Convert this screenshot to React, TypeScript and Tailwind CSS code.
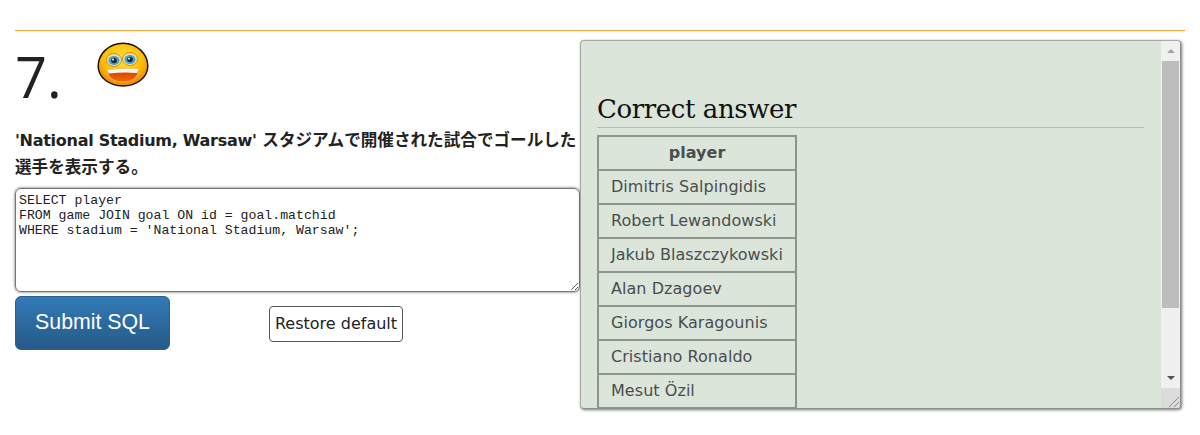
const PLAYERS = ["Dimitris Salpingidis", "Robert Lewandowski", "Jakub Blaszczykowski", "Alan Dzagoev", "Giorgos Karagounis", "Cristiano Ronaldo", "Mesut Özil"];

function Smiley() {
  return (
    <svg width="52" height="46" viewBox="0 0 52 46" className="block">
      <defs>
        <radialGradient id="face" cx="50%" cy="38%" r="62%">
          <stop offset="0%" stopColor="#ffe43c" />
          <stop offset="65%" stopColor="#fdbc08" />
          <stop offset="100%" stopColor="#ea8200" />
        </radialGradient>
        <linearGradient id="mouth" x1="0" y1="0" x2="0" y2="1">
          <stop offset="0%" stopColor="#d83000" />
          <stop offset="100%" stopColor="#f07000" />
        </linearGradient>
      </defs>
      <path d="M26 1.2C40 1.2 50.8 12 50.8 24C50.8 36 39 44 26 44C13 44 1.2 36 1.2 24C1.2 12 12 1.2 26 1.2Z" fill="url(#face)" stroke="#1c1408" strokeWidth="1.5" />
      <ellipse cx="17" cy="18" rx="7.5" ry="6.5" fill="#f9dca0" stroke="#d8881c" strokeWidth="1" />
      <ellipse cx="33" cy="17" rx="7.5" ry="6.5" fill="#f9dca0" stroke="#d8881c" strokeWidth="1" />
      <ellipse cx="17" cy="18.5" rx="5.5" ry="4.5" fill="#3fa6cc" />
      <ellipse cx="33" cy="17.5" rx="5.5" ry="4.5" fill="#3fa6cc" />
      <circle cx="17" cy="18.5" r="2.8" fill="#1e2a34" />
      <circle cx="33" cy="17.5" r="2.8" fill="#1e2a34" />
      <circle cx="16" cy="17.5" r="1" fill="#fff" />
      <circle cx="32" cy="16.5" r="1" fill="#fff" />
      <path d="M10.5 28Q26 26 41.5 27Q41 40 26 40Q11 40 10.5 28Z" fill="url(#mouth)" stroke="#f6c9a0" strokeWidth="0.6" />
      <path d="M10.5 28Q26 26 41.5 27Q41 29.5 40 31Q26 30 12 31.5Q10.8 30 10.5 28Z" fill="#fbf8f2" />
    </svg>
  );
}

function CorrectAnswer() {
  return (
    <div className="absolute left-[580px] top-[40px] flex h-[369px] w-[601px] overflow-hidden rounded-[4px] border border-[#a8a8a8] border-r-[#8b8f92] border-b-[#8b8f92] bg-[#dbe5da] shadow-[1px_1px_3px_rgba(0,0,0,0.55)]">
      <div className="min-w-0 flex-1 overflow-hidden pl-[16px] pr-[17px] pt-[51px]">
        <h3 className="border-b border-[#b4bab4] text-[26px] leading-[35px] text-[#111] [font-family:'DejaVu_Serif',serif] tracking-[-0.4px]">Correct answer</h3>
        <table className="mt-[7px] w-[200px] border-collapse text-[16px] tracking-[0.05px] text-[#4a4d50] [font-family:'DejaVu_Sans',sans-serif]">
          <thead>
            <tr>
              <th className="h-[34px] border-2 border-[#8f948f] p-0 text-center font-bold">player</th>
            </tr>
          </thead>
          <tbody>
            {PLAYERS.map((p) => (
              <tr key={p}>
                <td className="h-[34px] whitespace-nowrap border-2 border-[#8f948f] px-[12px] py-0">{p}</td>
              </tr>
            ))}
          </tbody>
        </table>
      </div>
      <div className="relative flex w-[19px] shrink-0 flex-col items-center bg-[#f0f0f0]">
        <div className="flex h-[20px] w-full items-center justify-center">
          <div className="h-0 w-0 border-x-[4px] border-b-[4px] border-x-transparent border-b-[#a3a3a3]" />
        </div>
        <div className="h-[247px] w-[17px] bg-[#bdbdbd]" />
        <div className="flex-1" />
        <div className="flex h-[20px] w-full items-center justify-center">
          <div className="h-0 w-0 border-x-[4px] border-t-[4px] border-x-transparent border-t-[#505050]" />
        </div>
        <div className="flex h-[20px] w-full items-end justify-end bg-[#dcdcdc]">
          <svg width="12" height="12" viewBox="0 0 12 12" className="block">
            <path d="M1 11L11 1M6 11L11 6" stroke="#8a8a8a" strokeWidth="1" />
          </svg>
        </div>
      </div>
    </div>
  );
}

export default function App() {
  return (
    <div className="relative h-[435px] w-[1200px] overflow-hidden bg-white px-[15px] pt-[30px] text-[#222] [font-family:'DejaVu_Sans','Noto_Sans_CJK_JP',sans-serif]">
      <div className="h-px w-full bg-[#f9a833]" />
      <div className="flex h-[81px] items-start">
        <h2 className="mt-[12px] w-[82px] text-[56px] font-normal leading-[66px] text-[#222] [font-family:'Open_Sans',sans-serif]">7.</h2>
        <div className="mt-[11px]"><Smiley /></div>
      </div>
      <p className="mt-[15px] w-[565px] text-[16.6px] font-bold leading-[27px]"><span className="text-[16px] tracking-[-0.28px]">'National Stadium, Warsaw'</span> スタジアムで開催された試合でゴールした選手を表示する。</p>
      <textarea
        readOnly
        spellCheck={false}
        className="mt-[7px] block h-[104px] w-[565px] resize-y rounded-[6px] border border-[#767676] px-[3px] pb-[3px] pt-[4px] text-[13.2px] leading-[15px] text-[#222] shadow-[0_0_3px_rgba(0,0,0,0.65)] outline-none [font-family:'Liberation_Mono',monospace]"
        defaultValue={"SELECT player\nFROM game JOIN goal ON id = goal.matchid\nWHERE stadium = 'National Stadium, Warsaw';"}
      />
      <div className="mt-[4px] flex items-start">
        <button className="h-[54px] w-[155px] rounded-[6px] border border-[#28608f] bg-gradient-to-b from-[#337ab7] to-[#265a88] pb-[1px] text-[21.3px] text-white [font-family:'Liberation_Sans',sans-serif]">Submit SQL</button>
        <button className="ml-[99px] mt-[10px] h-[36px] w-[134px] rounded-[4px] border border-[#555] bg-white text-[16px] text-[#222]">Restore default</button>
      </div>
      <CorrectAnswer />
    </div>
  );
}
